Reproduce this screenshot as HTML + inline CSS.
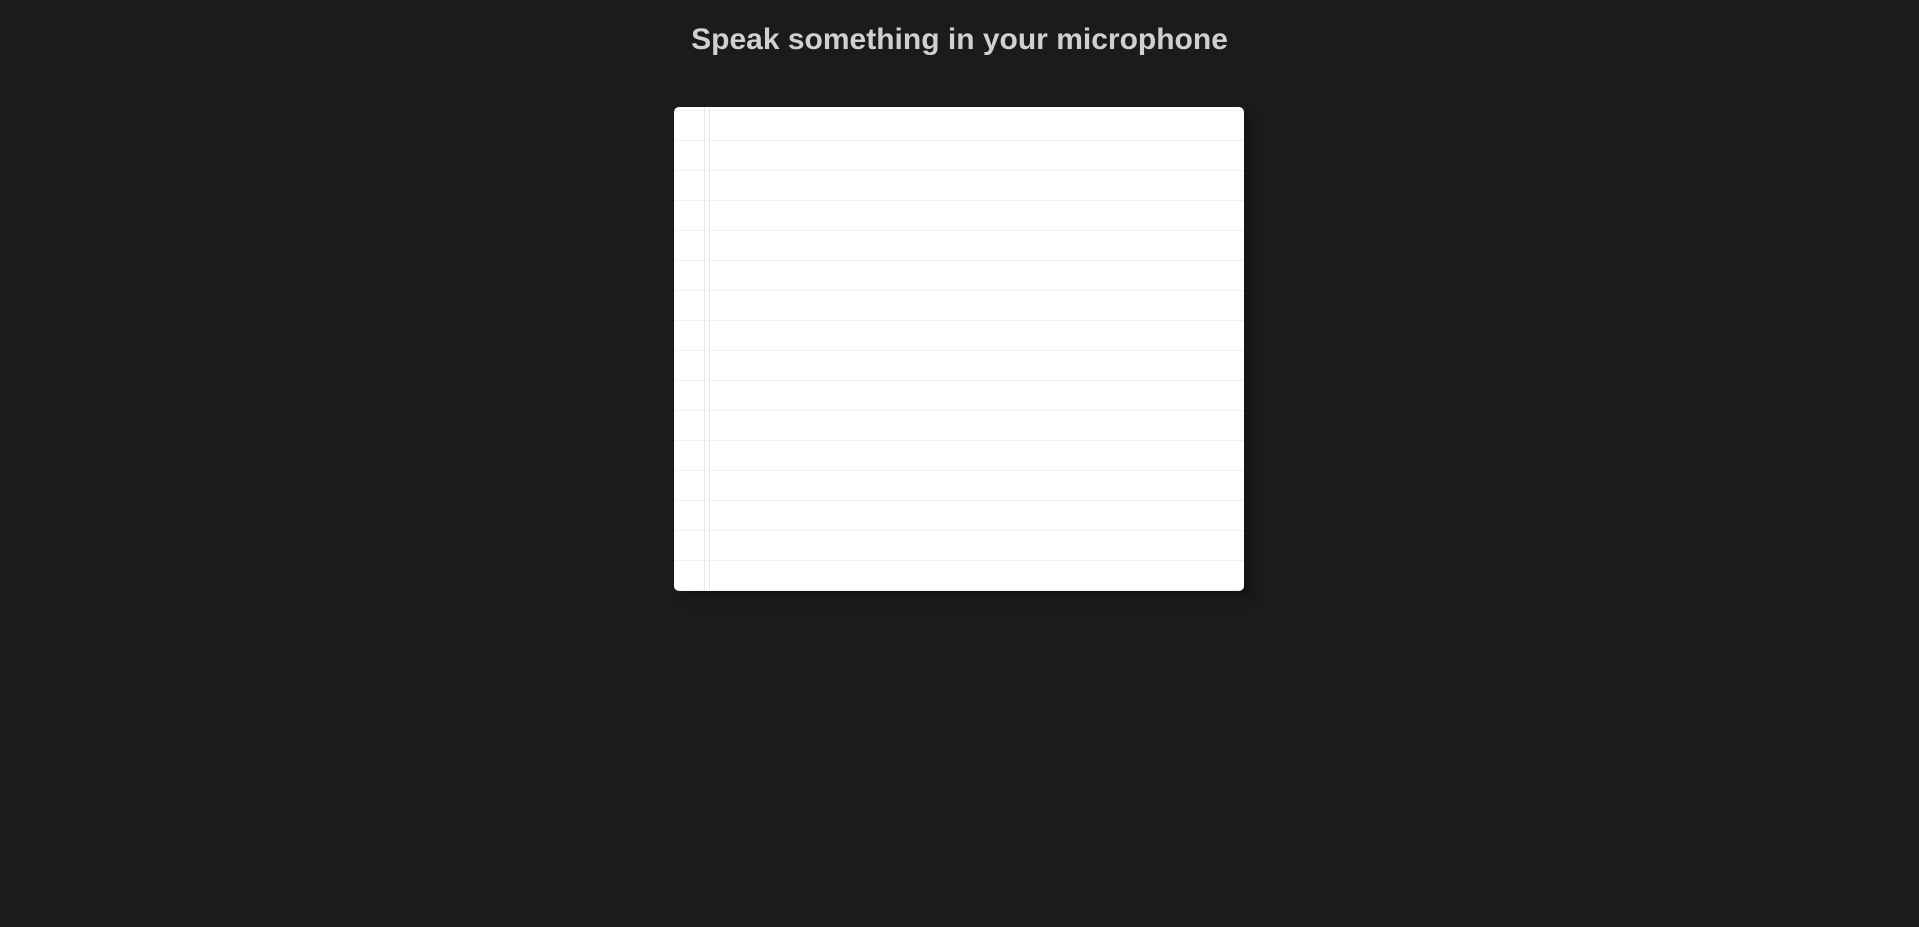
<!DOCTYPE html>
<html><head><style>
html,body{margin:0;padding:0;width:1919px;height:927px;background:#1b1b1d;overflow:hidden;font-family:"Liberation Sans",Arial,sans-serif}
h1{position:absolute;left:0;width:1919px;text-align:center;margin:0;top:22px;font-size:30px;line-height:36px;font-weight:bold;color:#d0d0d2}
.paper{position:absolute;left:674px;top:107px;width:570px;height:484px;background:#fff;border-radius:5px;box-shadow:8px 8px 10px rgba(0,0,0,0.25);overflow:hidden;
background-image:repeating-linear-gradient(to bottom,transparent 0,transparent 3px,#eef2f5 3px,#eef2f5 4px,transparent 4px,transparent 30px)}
.m{position:absolute;top:0;bottom:0;width:1px;background:#f3e4e4}
</style></head><body>
<h1>Speak something in your microphone</h1>
<div class="paper"><div class="m" style="left:30px"></div><div class="m" style="left:35px"></div></div>
</body></html>
